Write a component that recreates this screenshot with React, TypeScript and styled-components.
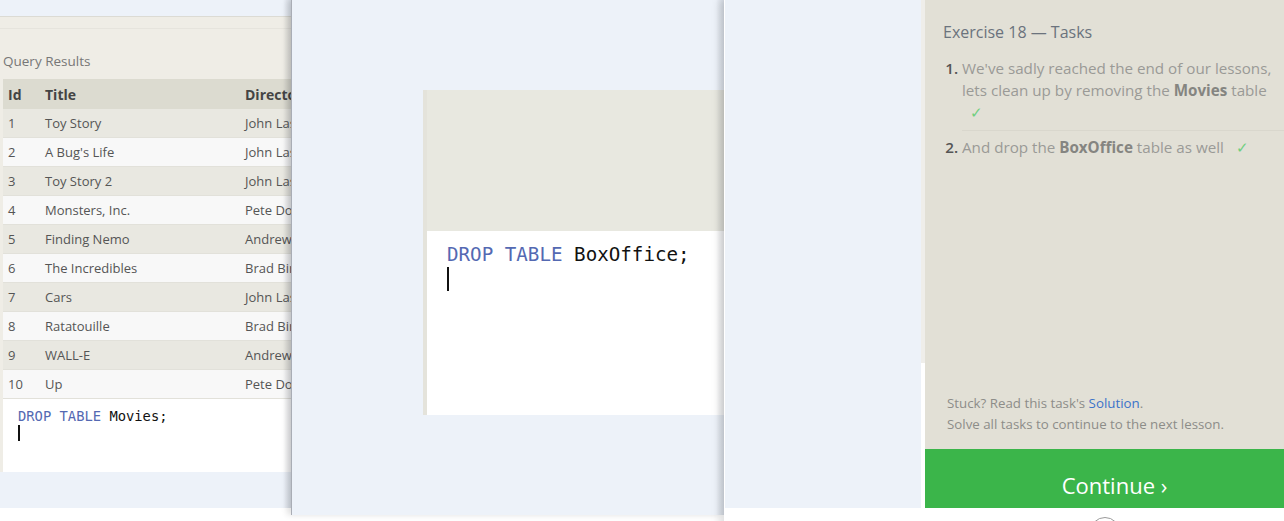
import React from 'react';
import styled, {createGlobalStyle} from 'styled-components';

const GlobalStyle = createGlobalStyle`
    html, body {
        margin: 0;
        padding: 0;
        background: #ffffff;
        overflow: hidden;
    }
    body {
        font-family: "Open Sans", "Noto Sans", sans-serif;
    }
`;

const BLUE = '#edf2f9';

const Screen = styled.div`
    display: flex;
    width: 1284px;
    height: 521px;
    overflow: hidden;
    align-items: flex-start;
`;

// ---- left window: query results ----

const ResultsWindow = styled.div`
    position: relative;
    width: 291px;
    flex: none;
    display: flex;
    flex-direction: column;
    overflow: hidden;
`;

const TopGap = styled.div`
    height: 16px;
    background: ${BLUE};
`;

const ResultsBox = styled.div`
    background: #efede6;
    border-top: 1px solid #dcdbd4;
    padding-left: 3px;
    display: flex;
    flex-direction: column;
`;

const ClippedStrip = styled.div`
    height: 11px;
    border-bottom: 1px solid #e6e4dd;
    margin-left: -3px;
`;

const ResultsTitle = styled.div`
    font-size: 13.5px;
    color: #777;
    line-height: 20px;
    padding: 22px 0 0 0;
    height: 50px;
    box-sizing: border-box;
`;

const Table = styled.div`
    width: 420px;
    display: flex;
    flex-direction: column;
`;

const Row = styled.div<{$head?: boolean; $odd?: boolean}>`
    display: grid;
    grid-template-columns: 37px 200px 1fr;
    height: ${p => p.$head ? 30 : 29}px;
    align-items: center;
    box-sizing: border-box;
    background: ${p => p.$head ? '#dcdbd0' : p.$odd ? '#e9e8e1' : '#f8f8f8'};
    border-bottom: ${p => p.$head ? 'none' : '1px solid #e2e1da'};
    font-size: ${p => p.$head ? 14 : 13}px;
    font-weight: ${p => p.$head ? 700 : 400};
    color: ${p => p.$head ? '#444' : '#555'};
`;

const Cell = styled.div`
    padding-left: 5px;
    white-space: nowrap;
`;

const SmallEditor = styled.div`
    background: #fff;
    height: 73px;
    padding: 8px 0 0 15px;
    box-sizing: border-box;
    font-family: "DejaVu Sans Mono", "Liberation Mono", monospace;
    font-size: 13.8px;
    line-height: 18px;
    color: #111;
`;

const Keyword = styled.span`
    color: #5469b2;
`;

const Caret = styled.div<{$h: number}>`
    width: 2px;
    height: ${p => p.$h}px;
    background: #111;
`;

const BottomBlue = styled.div`
    height: 36px;
    background: ${BLUE};
`;

const EdgeShade = styled.div`
    position: absolute;
    top: 0;
    right: 0;
    width: 8px;
    height: 100%;
    background: linear-gradient(to right, rgba(0,0,0,0), rgba(40,50,70,0.12));
    pointer-events: none;
`;

// ---- middle window: editor ----

const EditorWindow = styled.div`
    position: relative;
    width: 432px;
    flex: none;
    border-left: 1px solid #a9adb5;
    box-shadow: -4px 0 6px rgba(0,0,0,0.12);
    overflow: hidden;
`;

const BlueArea = styled.div<{$h: number}>`
    height: ${p => p.$h}px;
    background: ${BLUE};
    box-sizing: border-box;
`;

const EditorStage = styled(BlueArea)`
    padding: 90px 0 0 131px;
`;

const EditorFrame = styled.div`
    border-left: 4px solid #e4e3db;
    width: 400px;
`;

const EditorHead = styled.div`
    height: 141px;
    background: #e8e8e0;
`;

const BigEditor = styled.div`
    height: 184px;
    background: #fff;
    padding: 12px 0 0 20px;
    box-sizing: border-box;
    font-family: "DejaVu Sans Mono", "Liberation Mono", monospace;
    font-size: 19.2px;
    line-height: 24px;
    color: #111;
`;

// ---- right window: tasks ----

const TasksWindow = styled.div`
    position: relative;
    flex: 1;
    border-left: 1px solid #fff;
    box-shadow: -5px 0 8px rgba(0,0,0,0.12);
    display: flex;
    flex-direction: column;
    background: #fff;
`;

const TasksRow = styled.div`
    display: flex;
    height: 508px;
    background: ${BLUE};
`;

const Spacer = styled.div`
    width: 196px;
    flex: none;
`;

const Seam = styled.div`
    width: 4px;
    flex: none;
    background: linear-gradient(to bottom, #efeeea 0, #efeeea 363px, #fff 363px);
`;

const TaskPanel = styled.div`
    flex: 1;
    display: flex;
    flex-direction: column;
    background: #e2e0d6;
`;

const TaskBody = styled.div`
    flex: 1;
    padding: 20px 0 0 18px;
    display: flex;
    flex-direction: column;
`;

const TaskHeading = styled.div`
    font-size: 16px;
    line-height: 24px;
    color: #6b737d;
`;

const TaskList = styled.ol`
    margin: 13px 0 0 0;
    padding: 0 0 0 19px;
`;

const TaskItem = styled.li<{$first?: boolean}>`
    font-size: 15.2px;
    line-height: 22px;
    color: #9a9a96;
    padding: ${p => p.$first ? '0 0 7px' : '5px 0 0'};
    border-bottom: ${p => p.$first ? '1px solid #d9d7cd' : 'none'};

    &::marker {
        color: #555;
        font-weight: 600;
    }

    b {
        color: #858581;
        font-weight: 700;
    }
`;

const Check = styled.span`
    color: #6fcf7f;
    margin-left: 8px;
`;

const Help = styled.div`
    margin-top: auto;
    padding: 0 0 14px 4px;
    font-size: 13.3px;
    line-height: 21px;
    color: #8d8d89;
`;

const SolutionLink = styled.span`
    color: #3b73c9;
`;

const ContinueButton = styled.div`
    height: 59px;
    background: #3bb54a;
    color: #fff;
    font-size: 22px;
    line-height: 30px;
    padding: 21px 0 0 20px;
    box-sizing: border-box;
    text-align: center;
`;

const Footer = styled.div`
    display: flex;
    padding-left: 200px;
`;

const FooterCenter = styled.div`
    flex: 1;
    display: flex;
    justify-content: center;
    padding-top: 9px;
`;

const Circle = styled.div`
    width: 30px;
    height: 30px;
    border-radius: 50%;
    border: 1px solid #9a9a9a;
    box-sizing: border-box;
`;

const movies = [
    ['1', 'Toy Story', 'John Lasseter'],
    ['2', "A Bug's Life", 'John Lasseter'],
    ['3', 'Toy Story 2', 'John Lasseter'],
    ['4', 'Monsters, Inc.', 'Pete Docter'],
    ['5', 'Finding Nemo', 'Andrew Stanton'],
    ['6', 'The Incredibles', 'Brad Bird'],
    ['7', 'Cars', 'John Lasseter'],
    ['8', 'Ratatouille', 'Brad Bird'],
    ['9', 'WALL-E', 'Andrew Stanton'],
    ['10', 'Up', 'Pete Docter'],
];

const App = () => {
    return <>
        <GlobalStyle/>
        <Screen>
            <ResultsWindow>
                <TopGap/>
                <ResultsBox>
                    <ClippedStrip/>
                    <ResultsTitle>Query Results</ResultsTitle>
                    <Table>
                        <Row $head>
                            <Cell>Id</Cell>
                            <Cell>Title</Cell>
                            <Cell>Director</Cell>
                        </Row>
                        {movies.map((m, i) => (
                            <Row key={m[0]} $odd={i % 2 === 0}>
                                <Cell>{m[0]}</Cell>
                                <Cell>{m[1]}</Cell>
                                <Cell>{m[2]}</Cell>
                            </Row>
                        ))}
                    </Table>
                    <SmallEditor>
                        <div><Keyword>DROP TABLE</Keyword> Movies;</div>
                        <Caret $h={16}/>
                    </SmallEditor>
                </ResultsBox>
                <BottomBlue/>
                <EdgeShade/>
            </ResultsWindow>

            <EditorWindow>
                <EditorStage $h={515}>
                    <EditorFrame>
                        <EditorHead/>
                        <BigEditor>
                            <div><Keyword>DROP TABLE</Keyword> BoxOffice;</div>
                            <Caret $h={24}/>
                        </BigEditor>
                    </EditorFrame>
                </EditorStage>
                <EdgeShade/>
            </EditorWindow>

            <TasksWindow>
                <TasksRow>
                    <Spacer/>
                    <Seam/>
                    <TaskPanel>
                        <TaskBody>
                            <TaskHeading>Exercise 18 — Tasks</TaskHeading>
                            <TaskList>
                                <TaskItem $first>
                                    We've sadly reached the end of our lessons, lets clean up by removing the <b>Movies</b> table
                                    <br/><Check>✓</Check>
                                </TaskItem>
                                <TaskItem>
                                    And drop the <b>BoxOffice</b> table as well <Check>✓</Check>
                                </TaskItem>
                            </TaskList>
                            <Help>
                                Stuck? Read this task's <SolutionLink>Solution</SolutionLink>.<br/>
                                Solve all tasks to continue to the next lesson.
                            </Help>
                        </TaskBody>
                        <ContinueButton>Continue ›</ContinueButton>
                    </TaskPanel>
                </TasksRow>
                <Footer>
                    <FooterCenter>
                        <Circle/>
                    </FooterCenter>
                </Footer>
            </TasksWindow>
        </Screen>
    </>;
};

export default App;
